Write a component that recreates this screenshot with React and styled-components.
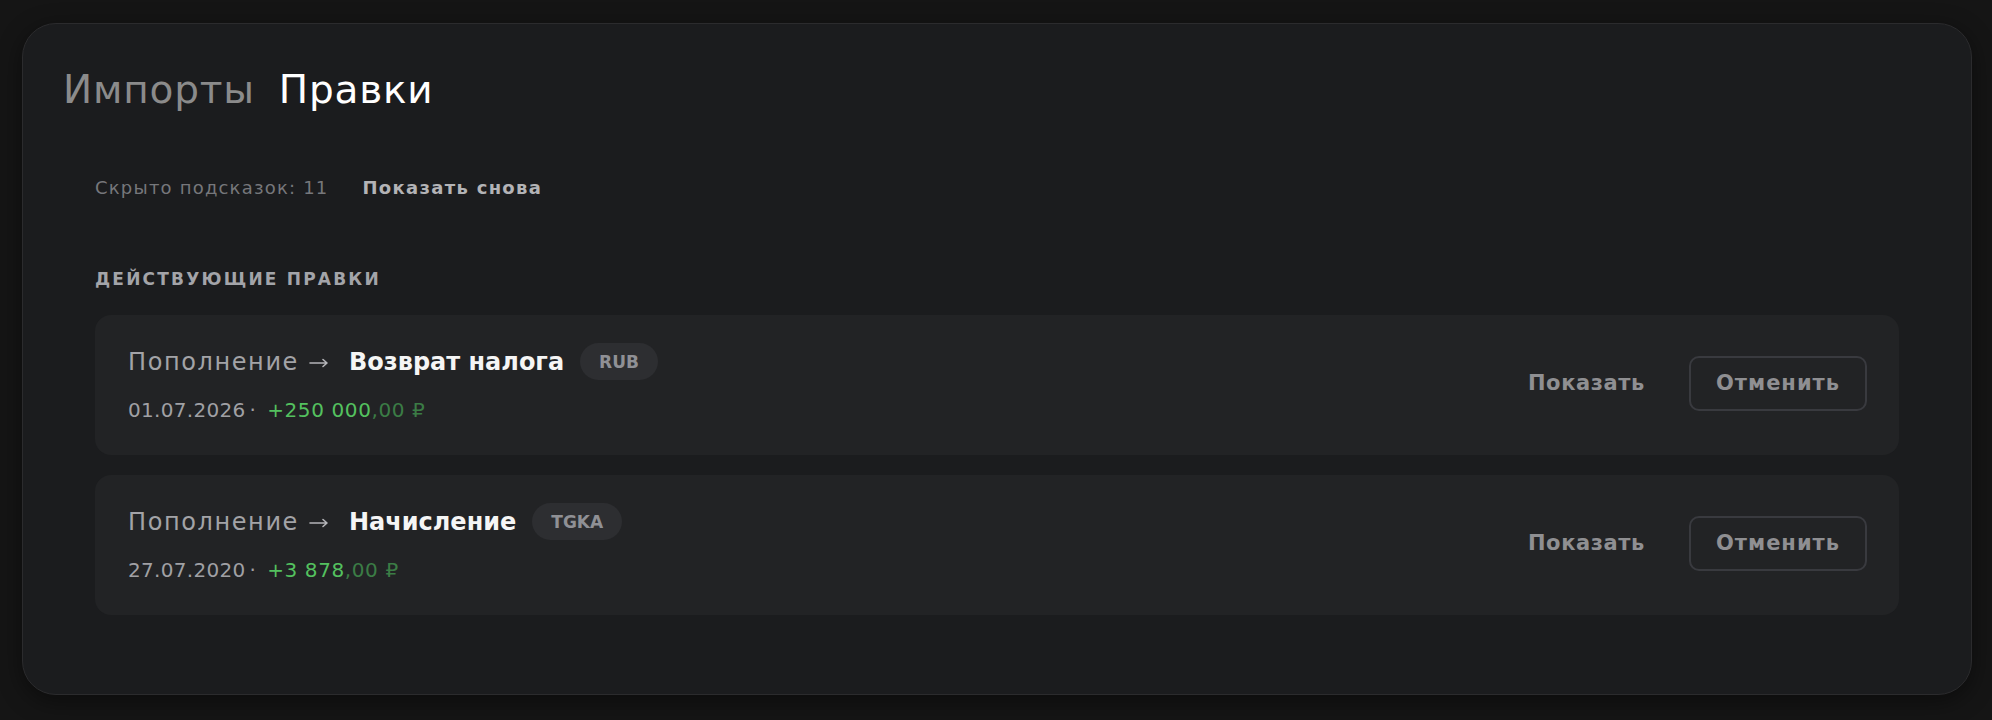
import React from 'react'
import styled, { createGlobalStyle } from 'styled-components'

const GlobalStyle = createGlobalStyle`
  html, body {
    margin: 0;
    background: #151515;
  }
  body {
    font-family: "DejaVu Sans", "Noto Sans", sans-serif;
  }
`

const Page = styled.div`
  padding: 23px 20px 25px 22px;
`

const Panel = styled.section`
  background: #1b1c1e;
  border: 1px solid #2b2b2d;
  border-radius: 34px;
  padding: 41px 39px 40px 40px;
  box-shadow: 0 6px 24px rgba(0, 0, 0, 0.45);
`

const Tabs = styled.div`
  display: flex;
  align-items: center;
  gap: 24px;
  height: 48px;
`

const Tab = styled.button`
  background: none;
  border: 0;
  padding: 0;
  font-family: inherit;
  font-size: 39px;
  font-weight: 500;
  letter-spacing: 0.8px;
  color: ${(p) => (p.$active ? '#ffffff' : '#8b8b8b')};
  cursor: pointer;
`

const Body = styled.div`
  padding: 62px 33px 39px 32px;
  display: flex;
  flex-direction: column;
`

const HintRow = styled.div`
  display: flex;
  align-items: center;
  gap: 34px;
  height: 24px;
  font-size: 18px;
`

const HintText = styled.span`
  color: #76777b;
  letter-spacing: 1.2px;
`

const HintLink = styled.button`
  background: none;
  border: 0;
  padding: 0;
  font-family: inherit;
  font-size: 18px;
  font-weight: 600;
  letter-spacing: 1.3px;
  color: #b3b3b6;
  cursor: pointer;
`

const SectionTitle = styled.h3`
  margin: 69px 0 25px;
  height: 22px;
  line-height: 22px;
  font-size: 17px;
  font-weight: 600;
  letter-spacing: 2.2px;
  text-transform: uppercase;
  color: #a3a4a9;
`

const List = styled.div`
  display: flex;
  flex-direction: column;
  gap: 20px;
`

const Card = styled.div`
  display: flex;
  align-items: center;
  justify-content: space-between;
  background: #222325;
  border-radius: 16px;
  padding: 28px 32px 32px 33px;
`

const Info = styled.div`
  display: flex;
  flex-direction: column;
  gap: 17px;
`

const TitleLine = styled.div`
  display: flex;
  align-items: center;
  height: 37px;
  font-size: 24px;
`

const Source = styled.span`
  color: #a3a3a7;
  letter-spacing: 1.6px;
`

const ArrowIcon = styled.svg`
  width: 20px;
  height: 10px;
  margin: 2px 20px 0 10px;
  flex-shrink: 0;
`

const Target = styled.span`
  color: #f5f5f5;
  font-weight: 600;
`

const Badge = styled.span`
  margin-left: 16px;
  display: inline-flex;
  align-items: center;
  height: 37px;
  padding: 0 19px;
  border-radius: 19px;
  background: #2d2e31;
  color: #8f9095;
  font-size: 17px;
  font-weight: 700;
`

const MetaLine = styled.div`
  display: flex;
  align-items: center;
  height: 26px;
  font-size: 20px;
  letter-spacing: 0.3px;
  color: #a0a0a4;
`

const Dot = styled.span`
  margin: 0 11px 0 4px;
`

const Amount = styled.span`
  color: #54c15f;
  letter-spacing: 0.6px;
`

const Cents = styled.span`
  color: #3b7c45;
  letter-spacing: 0.6px;
`

const Actions = styled.div`
  display: flex;
  align-items: center;
  gap: 44px;
`

const TextButton = styled.button`
  background: none;
  border: 0;
  padding: 0;
  font-family: inherit;
  font-size: 21px;
  font-weight: 600;
  letter-spacing: 0.6px;
  color: #8f8f92;
  cursor: pointer;
`

const OutlineButton = styled.button`
  width: 178px;
  height: 55px;
  background: transparent;
  border: 2px solid #393a3f;
  border-radius: 10px;
  font-family: inherit;
  font-size: 21px;
  font-weight: 600;
  letter-spacing: 1px;
  color: #8f8f92;
  cursor: pointer;
`

const edits = [
  { id: 1, target: 'Возврат налога', badge: 'RUB', date: '01.07.2026', amount: '+250 000', cents: ',00 ₽' },
  { id: 2, target: 'Начисление', badge: 'TGKA', date: '27.07.2020', amount: '+3 878', cents: ',00 ₽' },
]

function Arrow() {
  return (
    <ArrowIcon viewBox="0 0 20 10" fill="none" stroke="#b4b4b8" strokeWidth="1.6" strokeLinecap="round" strokeLinejoin="round">
      <path d="M1 5h17M14 1.5 18 5l-4 3.5" />
    </ArrowIcon>
  )
}

function EditCard({ edit }) {
  return (
    <Card>
      <Info>
        <TitleLine>
          <Source>Пополнение</Source>
          <Arrow />
          <Target>{edit.target}</Target>
          <Badge>{edit.badge}</Badge>
        </TitleLine>
        <MetaLine>
          {edit.date}
          <Dot>·</Dot>
          <Amount>{edit.amount}</Amount>
          <Cents>{edit.cents}</Cents>
        </MetaLine>
      </Info>
      <Actions>
        <TextButton>Показать</TextButton>
        <OutlineButton>Отменить</OutlineButton>
      </Actions>
    </Card>
  )
}

export default function App() {
  return (
    <>
      <GlobalStyle />
      <Page>
        <Panel>
          <Tabs>
            <Tab>Импорты</Tab>
            <Tab $active>Правки</Tab>
          </Tabs>
          <Body>
            <HintRow>
              <HintText>Скрыто подсказок: 11</HintText>
              <HintLink>Показать снова</HintLink>
            </HintRow>
            <SectionTitle>Действующие правки</SectionTitle>
            <List>
              {edits.map((e) => (
                <EditCard key={e.id} edit={e} />
              ))}
            </List>
          </Body>
        </Panel>
      </Page>
    </>
  )
}
